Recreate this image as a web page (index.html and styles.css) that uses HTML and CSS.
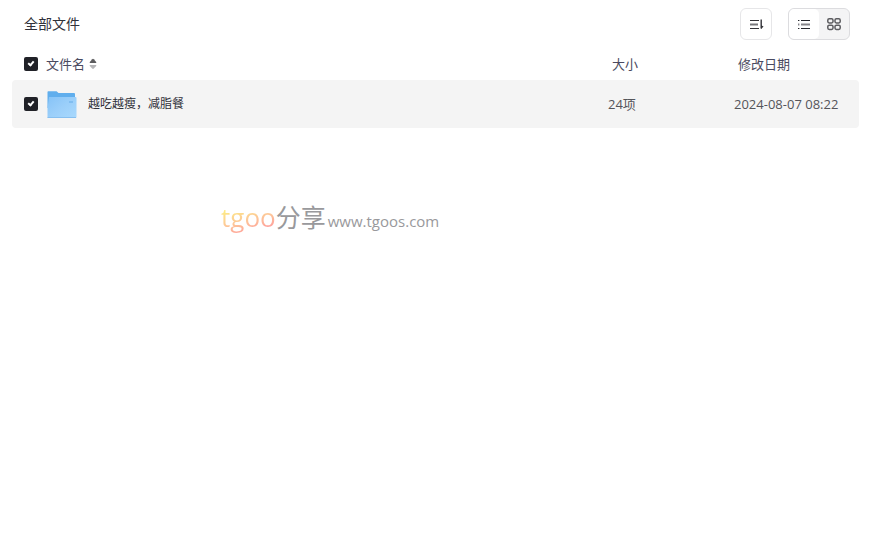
FILE: index.html
```html
<!DOCTYPE html>
<html lang="zh-CN">
<head>
    <meta charset="UTF-8">
    <meta name="viewport" content="width=device-width, initial-scale=1.0">
    <title>全部文件</title>
    <link rel="stylesheet" href="styles.css">
</head>
<body>
    <div class="container">
        <header class="toolbar">
            <h1>全部文件</h1>
            <button type="button" class="sort-btn" aria-label="排序">
                <svg width="16" height="16" viewBox="0 0 16 16" fill="none">
                    <path d="M2 4.5H11M2 12.5H11" stroke="#333338" stroke-width="1.2"/>
                    <path d="M2 8.5H10" stroke="#77777b" stroke-width="2"/>
                    <path d="M13.2 3.5V12.5" stroke="#333338" stroke-width="1.4"/>
                    <path d="M13 9.2L15.6 10.4L13 13Z" fill="#333338"/>
                </svg>
            </button>
            <div class="view-switch">
                <button type="button" class="active" aria-label="列表">
                    <svg width="16" height="16" viewBox="0 0 16 16" fill="none">
                        <path d="M2 4.5H3.4M5 4.5H14M2 12.5H3.4M5 12.5H14" stroke="#25262b" stroke-width="1.2"/>
                        <path d="M2 8.5H3.4M5 8.5H14" stroke="#85858a" stroke-width="1.8"/>
                    </svg>
                </button>
                <button type="button" aria-label="网格">
                    <svg width="16" height="16" viewBox="0 0 16 16" fill="none" stroke="#5c5c60" stroke-width="1.5">
                        <rect x="1.8" y="2.8" width="5.2" height="4.2" rx="1.4"/>
                        <rect x="9" y="2.8" width="5.2" height="4.2" rx="1.4"/>
                        <rect x="1.8" y="9.2" width="5.2" height="4.2" rx="1.4"/>
                        <rect x="9" y="9.2" width="5.2" height="4.2" rx="1.4"/>
                    </svg>
                </button>
            </div>
        </header>

        <table class="file-list">
            <thead>
                <tr>
                    <th class="col-name">
                        <div class="name">
                            <input type="checkbox" id="checkAll" aria-label="全选" checked>
                            <label for="checkAll">文件名</label>
                            <svg class="sort-icon" width="8" height="12" viewBox="0 0 8 12">
                                <path d="M1 5Q.4 5 .8 4L3.2 1.2Q4 .4 4.8 1.2L7.2 4Q7.6 5 7 5Z" fill="#5c5c5e"/>
                                <path d="M1 7Q.4 7 .8 8L3.2 10.5Q4 11.3 4.8 10.5L7.2 8Q7.6 7 7 7Z" fill="#b5b5b7"/>
                            </svg>
                        </div>
                    </th>
                    <th class="col-size">大小</th>
                    <th class="col-date">修改日期</th>
                </tr>
            </thead>
            <tbody>
                <tr>
                    <td>
                        <div class="name">
                            <input type="checkbox" id="file1" checked>
                            <svg class="folder" width="32" height="32" viewBox="0 0 32 32">
                                <defs>
                                    <linearGradient id="front" x1="0" y1="0" x2="1" y2="1">
                                        <stop offset="0" stop-color="#86c3f7"/>
                                        <stop offset=".5" stop-color="#9bcffa"/>
                                        <stop offset="1" stop-color="#a9d9fd"/>
                                    </linearGradient>
                                </defs>
                                <path d="M1.5 4Q1.5 3.2 2.3 3.2H10.5L12.5 5H28Q29 5 29 6V20H1.5Z" fill="#60aeed"/>
                                <path d="M3 9H29.5Q30.5 9 30.5 10V29Q30.5 30 29.5 30H2.5Q1.5 30 1.5 29V20Z" fill="url(#front)"/>
                                <path d="M1.5 29.5H30" stroke="#86bff0"/>
                                <path d="M23 14H27" stroke="#78b8ee" stroke-width="1.5"/>
                            </svg>
                            <label for="file1">越吃越瘦，减脂餐</label>
                        </div>
                    </td>
                    <td>24项</td>
                    <td>2024-08-07 08:22</td>
                </tr>
            </tbody>
        </table>
    </div>

    <div class="watermark">
        <span class="brand">tgoo</span><span class="share">分享</span>
        <span class="site">www.tgoos.com</span>
    </div>
</body>
</html>
```

FILE: styles.css
```css
* {
    box-sizing: border-box;
}
body {
    margin: 0;
    background-color: #fff;
    color: #30313a;
    font-family: "Open Sans", "Noto Sans CJK SC", sans-serif;
    font-size: 13px;
    line-height: 20px;
}
.container {
    padding: 0 15px 0 12px;
}
.toolbar {
    display: flex;
    align-items: center;
    height: 48px;
    padding: 0 9px 0 12px;
}
h1 {
    margin: 0 auto 0 0;
    font-size: 14px;
    font-weight: 400;
}
button {
    display: flex;
    align-items: center;
    justify-content: center;
    padding: 0;
    border: none;
    background: none;
    cursor: pointer;
}
.sort-btn {
    width: 32px;
    height: 32px;
    margin-right: 16px;
    border: 1px solid #e6e6e8;
    border-radius: 6px;
}
.view-switch {
    display: flex;
    height: 32px;
    border: 1px solid #dcdcdf;
    border-radius: 6px;
    background-color: #f4f4f5;
    overflow: hidden;
}
.view-switch button {
    width: 30px;
}
.view-switch .active {
    border-radius: 5px;
    background-color: #fff;
}
.file-list {
    width: 100%;
    table-layout: fixed;
    border-collapse: separate;
    border-spacing: 0;
}
th, td {
    padding: 0;
    text-align: left;
    font-weight: 400;
}
th {
    height: 32px;
    padding-left: 4px;
    color: #4a4a60;
}
td {
    height: 48px;
    background-color: #f4f4f4;
    color: #55555a;
}
th:first-child, td:first-child {
    padding-left: 12px;
}
td:first-child {
    border-radius: 4px 0 0 4px;
}
td:last-child {
    border-radius: 0 4px 4px 0;
}
.col-size {
    width: 126px;
}
.col-date {
    width: 125px;
}
.name {
    display: flex;
    align-items: center;
}
.name input {
    appearance: none;
    width: 14px;
    height: 14px;
    margin: 0 8px 0 0;
    border-radius: 2px;
    background-color: #202127;
}
.name input:checked::before {
    content: "";
    display: block;
    width: 2px;
    height: 4px;
    margin: 3px auto 0;
    border: solid #fff;
    border-width: 0 2px 2px 0;
    transform: rotate(40deg);
}
.sort-icon {
    margin-left: 4px;
}
.folder {
    margin-right: 10px;
}
td label {
    color: #30313a;
    font-size: 12px;
}
.watermark {
    position: absolute;
    top: 200px;
    left: 221px;
    display: flex;
    align-items: baseline;
    color: #99999c;
    white-space: nowrap;
    pointer-events: none;
}
.brand {
    background-image: linear-gradient(165deg, #fdea85 25%, #fdc898 55%, #ff9c9c 85%);
    background-clip: text;
    -webkit-background-clip: text;
    color: transparent;
    font-size: 26px;
    line-height: 34px;
}
.share {
    font-size: 25px;
}
.site {
    margin-left: 2px;
    font-size: 15px;
}
```
